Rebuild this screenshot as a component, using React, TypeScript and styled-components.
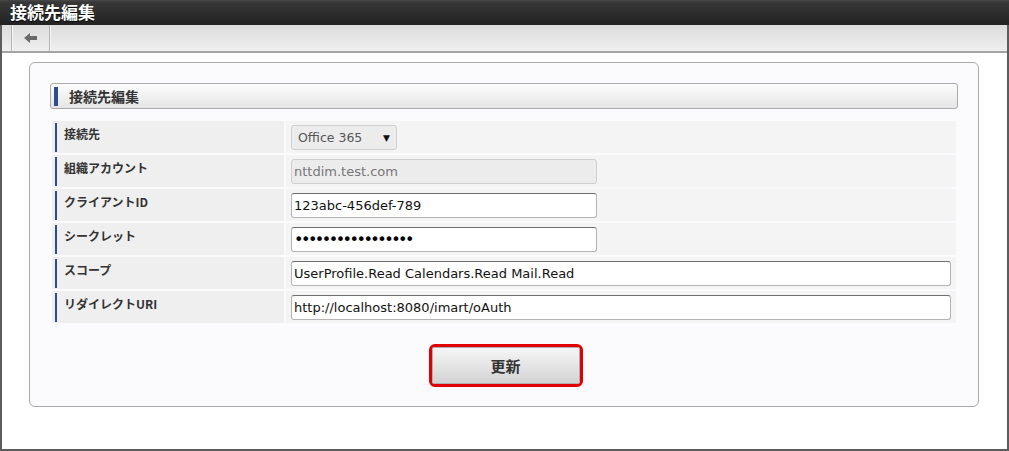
import React from 'react';
import styled, { createGlobalStyle } from 'styled-components';

const GlobalStyle = createGlobalStyle`
  html, body {
    margin: 0;
    padding: 0;
    background: #ffffff;
  }
  body {
    font-family: "Noto Sans CJK JP", "DejaVu Sans", sans-serif;
    color: #333;
  }
`;

interface Field {
  label: string;
  kind: 'select' | 'disabled' | 'text' | 'password';
  value: string;
  wide?: boolean;
}

const fields: Field[] = [
  { label: '接続先', kind: 'select', value: 'Office 365' },
  { label: '組織アカウント', kind: 'disabled', value: 'nttdim.test.com' },
  { label: 'クライアントID', kind: 'text', value: '123abc-456def-789' },
  { label: 'シークレット', kind: 'password', value: 'xxxxxxxxxxxxxxxxx' },
  { label: 'スコープ', kind: 'text', value: 'UserProfile.Read Calendars.Read Mail.Read', wide: true },
  { label: 'リダイレクトURI', kind: 'text', value: 'http://localhost:8080/imart/oAuth', wide: true },
];

const BackArrow = () => (
  <svg width="14" height="10" viewBox="0 0 14 10">
    <path d="M0 5 L6 0 L6 3 L13 3 L13 7 L6 7 L6 10 Z" fill="#6a6a6a" />
  </svg>
);

const App: React.FC = () => {
  return (
    <>
      <GlobalStyle />
      <Frame>
        <TitleBar>接続先編集</TitleBar>
        <Toolbar>
          <ToolButton type="button" aria-label="戻る">
            <BackArrow />
          </ToolButton>
        </Toolbar>
        <Content>
          <Panel>
            <SectionHeader>接続先編集</SectionHeader>
            <FormGrid>
              {fields.map((f) => (
                <React.Fragment key={f.label}>
                  <LabelCell>
                    <LabelText>{f.label}</LabelText>
                  </LabelCell>
                  <ValueCell>
                    {f.kind === 'select' ? (
                      <SelectBox>
                        <span>{f.value}</span>
                        <Caret>▼</Caret>
                      </SelectBox>
                    ) : (
                      <TextInput
                        type={f.kind === 'password' ? 'password' : 'text'}
                        defaultValue={f.value}
                        disabled={f.kind === 'disabled'}
                        $wide={f.wide}
                      />
                    )}
                  </ValueCell>
                </React.Fragment>
              ))}
            </FormGrid>
            <ButtonRow>
              <Highlight>
                <SubmitButton type="button">更新</SubmitButton>
              </Highlight>
            </ButtonRow>
          </Panel>
        </Content>
      </Frame>
    </>
  );
};

const Frame = styled.div`
  width: 1009px;
  height: 451px;
  box-sizing: border-box;
  border: 2px solid #5c5c5c;
  border-top: 0;
  display: flex;
  flex-direction: column;
  background: #fff;
`;

const TitleBar = styled.div`
  height: 25px;
  margin: 0 -2px;
  padding-left: 10px;
  box-sizing: border-box;
  background: linear-gradient(#4a4a4a 0, #383838 2px, #222222 100%);
  color: #fff;
  font-weight: bold;
  font-size: 17px;
  line-height: 24px;
  text-shadow: 0 1px 1px #000;
`;

const Toolbar = styled.div`
  height: 28px;
  box-sizing: border-box;
  display: flex;
  padding-left: 9px;
  background: linear-gradient(#dcdcdc, #efefef);
  border-bottom: 2px solid #a4a4a4;
`;

const ToolButton = styled.button`
  width: 39px;
  height: 26px;
  margin: 0;
  padding: 0;
  display: flex;
  align-items: center;
  justify-content: center;
  background: transparent;
  border: 0;
  border-left: 1px solid #b4b4b4;
  border-right: 1px solid #b4b4b4;
  box-shadow: inset 1px 0 0 #f6f6f6, 1px 0 0 #f6f6f6;
`;

const Content = styled.div`
  flex: 1;
  padding: 9px 28px 0 27px;
`;

const Panel = styled.div`
  background: #fbfbfd;
  border: 1px solid #a9a9a9;
  border-radius: 6px;
  padding: 20px 20px 19px 20px;
`;

const SectionHeader = styled.div`
  position: relative;
  height: 26px;
  box-sizing: border-box;
  border: 1px solid #aaaaaa;
  border-radius: 3px;
  background: linear-gradient(#fdfdfd, #e5e5e5);
  padding-left: 18px;
  font-weight: bold;
  font-size: 14px;
  line-height: 24px;
  color: #333;

  &::before {
    content: '';
    position: absolute;
    left: 3px;
    top: 3px;
    bottom: 2px;
    width: 4px;
    background: #2c4c94;
  }
`;

const FormGrid = styled.div`
  margin-top: 10px;
  display: grid;
  grid-template-columns: 232px 1fr;
  grid-auto-rows: 32px;
  gap: 2px;
  padding: 2px;
`;

const LabelCell = styled.div`
  background: #efefef;
  padding: 2px 0 1px 3px;
  display: flex;
`;

const LabelText = styled.div`
  flex: 1;
  border-left: 2px solid #2c4c94;
  padding: 2px 0 0 7px;
  font-weight: bold;
  font-size: 12px;
  line-height: 18px;
  color: #333;
`;

const ValueCell = styled.div`
  background: #f4f4f4;
  padding: 4px 5px 0 5px;
`;

const TextInput = styled.input<{ $wide?: boolean }>`
  box-sizing: border-box;
  display: block;
  width: ${(p) => (p.$wide ? '100%' : '306px')};
  height: 25px;
  margin: 0;
  padding: 0 3px 0 2px;
  border: 1px solid #b4b4b4;
  border-top-color: #6e6e6e;
  border-radius: 3px;
  background: #fff;
  font-family: "DejaVu Sans", sans-serif;
  font-size: 13px;
  color: #111;
  outline: none;

  &[type='password'] {
    font-size: 16px;
    letter-spacing: -2.5px;
    color: #000;
  }

  &:disabled {
    background: #ececec;
    border-color: #cfcfcf;
    color: #777;
  }
`;

const SelectBox = styled.div`
  box-sizing: border-box;
  width: 106px;
  height: 25px;
  display: flex;
  align-items: center;
  justify-content: space-between;
  padding: 0 6px 0 6px;
  border: 1px solid #cfcfcf;
  border-radius: 3px;
  background: #ececec;
  font-family: "DejaVu Sans", sans-serif;
  font-size: 12.5px;
  color: #555;
`;

const Caret = styled.span`
  font-size: 9px;
  color: #111;
`;

const ButtonRow = styled.div`
  display: flex;
  justify-content: center;
  margin-top: 19px;
`;

const Highlight = styled.div`
  border: 3px solid #e00000;
  border-radius: 6px;
  margin-left: 3px;
`;

const SubmitButton = styled.button`
  display: block;
  width: 148px;
  height: 37px;
  margin: 0;
  border: 1px solid #b0b0b0;
  border-radius: 2px;
  background: linear-gradient(#f6f6f6, #d3d3d3);
  font-family: "Noto Sans CJK JP", sans-serif;
  font-weight: bold;
  font-size: 15px;
  color: #333;
`;

export default App;
